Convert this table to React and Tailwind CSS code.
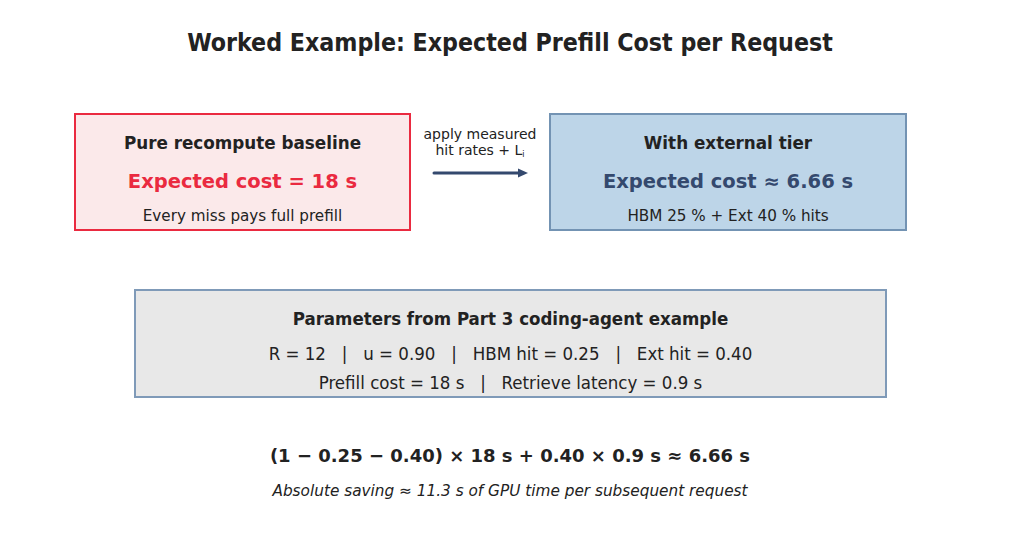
export default function App() {
  return (
    <div className="w-[1024px] h-[545px] bg-white text-[#222] font-['DejaVu_Sans',sans-serif] overflow-hidden">
      <h1 className="pt-[29px] pr-[4px] text-center text-[24.7px] font-bold leading-[28px] font-['DejaVu_Sans_Condensed','DejaVu_Sans',sans-serif]">
        Worked Example: Expected Prefill Cost per Request
      </h1>

      <div className="mt-[56px] flex items-start">
        <div className="ml-[74px] w-[337px] h-[118px] border-2 border-[#ea2a40] bg-[#fbe9ea] flex flex-col items-center pt-[18px]">
          <div className="text-[16.8px] font-bold leading-[20px]">Pure recompute baseline</div>
          <div className="mt-[18px] text-[19.5px] font-bold leading-[22px] text-[#ea2a40]">Expected cost = 18 s</div>
          <div className="mt-[14px] text-[15.2px] leading-[18px]">Every miss pays full prefill</div>
        </div>

        <div className="w-[138px] flex flex-col items-center pt-[13px]">
          <div className="text-[14px] leading-[16px] text-center">
            apply measured
            <br />
            hit rates + L<sub className="text-[8px] align-baseline">i</sub>
          </div>
          <svg className="mt-[9px] ml-[2px]" width="98" height="12" viewBox="0 0 98 12">
            <line x1="2" y1="6" x2="88" y2="6" stroke="#34496e" strokeWidth="3" strokeLinecap="round" />
            <path d="M86 1.5 L96 6 L86 10.5 Z" fill="#34496e" />
          </svg>
        </div>

        <div className="w-[358px] h-[118px] border-2 border-[#7393b3] bg-[#bdd5e8] flex flex-col items-center pt-[18px]">
          <div className="text-[16.8px] font-bold leading-[20px]">With external tier</div>
          <div className="mt-[18px] text-[19.5px] font-bold leading-[22px] text-[#34496e]">Expected cost ≈ 6.66 s</div>
          <div className="mt-[14px] text-[15.2px] leading-[18px]">HBM 25 % + Ext 40 % hits</div>
        </div>
      </div>

      <div className="mt-[58px] ml-[134px] w-[753px] h-[109px] border-2 border-[#7f9ab8] bg-[#e8e8e8] flex flex-col items-center pt-[17px] font-['DejaVu_Sans_Condensed','DejaVu_Sans',sans-serif]">
        <div className="text-[18.5px] font-bold leading-[22px]">Parameters from Part 3 coding-agent example</div>
        <div className="mt-[13px] text-[18.5px] leading-[22px] whitespace-pre">R = 12   |   u = 0.90   |   HBM hit = 0.25   |   Ext hit = 0.40</div>
        <div className="mt-[7px] text-[18.5px] leading-[22px] whitespace-pre">Prefill cost = 18 s   |   Retrieve latency = 0.9 s</div>
      </div>

      <div className="mt-[47px] pr-[4px] text-center text-[18px] font-bold leading-[22px]">
        (1 − 0.25 − 0.40) × 18 s + 0.40 × 0.9 s ≈ 6.66 s
      </div>
      <div className="mt-[15px] pr-[4px] text-center text-[15.3px] italic leading-[18px]">
        Absolute saving ≈ 11.3 s of GPU time per subsequent request
      </div>
    </div>
  );
}
